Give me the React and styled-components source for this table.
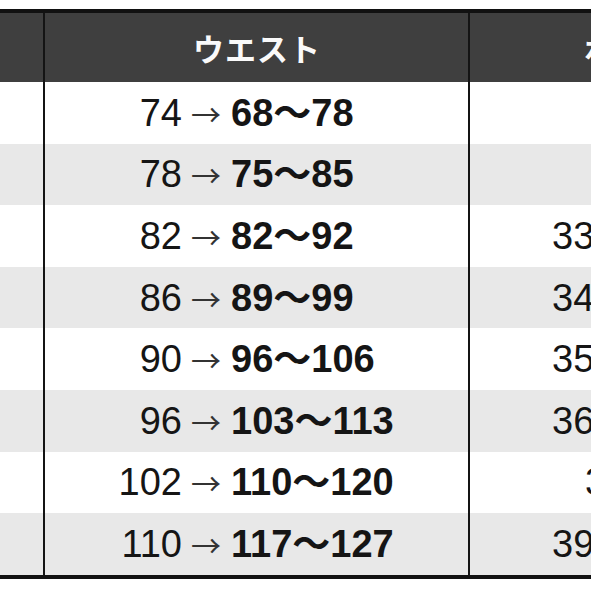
import React from "react";
import styled, { createGlobalStyle } from "styled-components";

const GlobalStyle = createGlobalStyle`
    body {
        margin: 0;
        background: #ffffff;
        font-family: "Liberation Sans", "Noto Sans CJK JP", sans-serif;
        color: #151515;
    }
`
const Frame = styled.div`
    width: 591px;
    height: 591px;
    overflow: hidden;
    padding-top: 9px;
    box-sizing: border-box;
`
const Table = styled.div`
    width: 968px;
    border-top: 4px solid #111;
    border-bottom: 4px solid #111;
`
const Row = styled.div`
    display: grid;
    grid-template-columns: 43px 425px 500px;
    height: ${p => (p.$head ? "69px" : "61.6px")};
    background: ${p => (p.$head ? "#3f3f3f" : p.$shade ? "#e8e8e8" : "#ffffff")};
`
const Cell = styled.div`
    display: flex;
    align-items: center;
    box-sizing: border-box;
    border-left: ${p => (p.$first ? "none" : "2px solid #141414")};
    white-space: nowrap;
    overflow: hidden;
`
const Line = styled.div`
    font-size: 38px;
    line-height: 44px;
    margin-left: ${p => p.$lead || 0}px;
`
const HeadText = styled.span`
    font-family: "Noto Sans CJK JP", sans-serif;
    color: #fafafa;
    font-weight: 700;
    font-size: 31px;
    letter-spacing: 1px;
    margin-left: ${p => p.$lead}px;
`
const From = styled.span`
    display: inline-block;
    width: 137px;
    text-align: right;
`
const Arrow = styled.span`
    font-family: "Noto Sans CJK JP", sans-serif;
    font-size: 30px;
    margin: 0 10px 0 9px;
    color: #333;
`
const To = styled.span`
    font-weight: 700;
`

const rows = [
    ["74", "68～78", "", 200],
    ["78", "75～85", "", 200],
    ["82", "82～92", "33", 82],
    ["86", "89～99", "34", 82],
    ["90", "96～106", "35", 82],
    ["96", "103～113", "36", 82],
    ["102", "110～120", "3", 115],
    ["110", "117～127", "39", 82],
]

const App = () => {
    return (
        <Frame>
            <GlobalStyle />
            <Table>
                <Row $head>
                    <Cell $first />
                    <Cell>
                        <HeadText $lead={148}>ウエスト</HeadText>
                    </Cell>
                    <Cell>
                        <HeadText $lead={114}>ボトム</HeadText>
                    </Cell>
                </Row>
                {rows.map(([from, to, side, lead], i) => (
                    <Row key={from} $shade={i % 2 === 1}>
                        <Cell $first />
                        <Cell>
                            <Line>
                                <From>{from}</From>
                                <Arrow>→</Arrow>
                                <To>{to}</To>
                            </Line>
                        </Cell>
                        <Cell>
                            <Line $lead={lead}>{side}</Line>
                        </Cell>
                    </Row>
                ))}
            </Table>
        </Frame>
    )
}
export default App
